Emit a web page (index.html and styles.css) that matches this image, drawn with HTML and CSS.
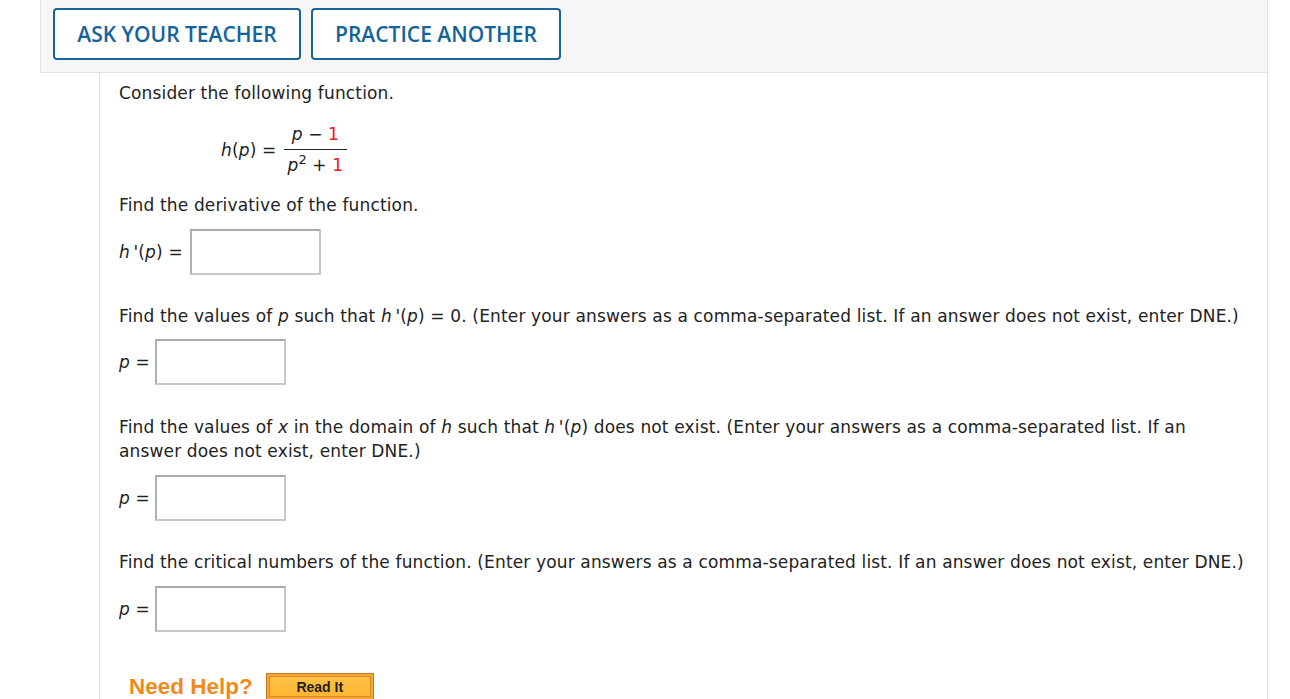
FILE: index.html
```html
<!DOCTYPE html>
<html>
<head>
<meta charset="utf-8">
<link rel="stylesheet" href="styles.css">
</head>
<body>
<div class="page">
  <div class="toolbar">
    <button class="tbtn">ASK YOUR TEACHER</button>
    <button class="tbtn">PRACTICE ANOTHER</button>
  </div>
  <div class="content">
    <p class="line first">Consider the following function.</p>
    <div class="formula">
      <span class="lhs"><i>h</i>(<i>p</i>) =</span>
      <span class="frac">
        <span class="num"><i>p</i> &minus; <span class="red">1</span></span>
        <span class="den"><i>p</i><sup>2</sup> + <span class="red">1</span></span>
      </span>
    </div>
    <p class="line q2">Find the derivative of the function.</p>
    <div class="answer a1"><span class="lbl"><i>h</i>&thinsp;'(<i>p</i>) =</span><span class="box"></span></div>
    <p class="line q3">Find the values of <i>p</i> such that <i>h</i>&thinsp;'(<i>p</i>) = 0. (Enter your answers as a comma-separated list. If an answer does not exist, enter DNE.)</p>
    <div class="answer a2"><span class="lbl lp"><i>p</i> =</span><span class="box"></span></div>
    <p class="line q4">Find the values of <i>x</i> in the domain of <i>h</i> such that <i>h</i>&thinsp;'(<i>p</i>) does not exist. (Enter your answers as a comma-separated list. If an<br>answer does not exist, enter DNE.)</p>
    <div class="answer a3"><span class="lbl lp"><i>p</i> =</span><span class="box"></span></div>
    <p class="line q5">Find the critical numbers of the function. (Enter your answers as a comma-separated list. If an answer does not exist, enter DNE.)</p>
    <div class="answer a4"><span class="lbl lp"><i>p</i> =</span><span class="box"></span></div>
    <div class="help">
      <span class="needhelp">Need Help?</span>
      <span class="readit">Read It</span>
    </div>
  </div>
</div>
</body>
</html>
```
FILE: styles.css
```css
html, body {
  margin: 0;
  padding: 0;
  background: #ffffff;
}
body {
  font-family: "DejaVu Sans", Verdana, sans-serif;
  color: #222222;
}
.page {
  padding-left: 40px;
  width: 1228px;
}
.toolbar {
  box-sizing: border-box;
  height: 73px;
  background: #f6f6f6;
  border: 1px solid #e2e2e2;
  border-top: none;
  display: flex;
  gap: 10px;
  padding: 8px 0 0 12px;
}
.tbtn {
  box-sizing: border-box;
  height: 52px;
  background: #ffffff;
  border: 2px solid #1a6496;
  border-radius: 4px;
  color: #14639a;
  font-family: "Open Sans", sans-serif;
  font-weight: 600;
  font-size: 21px;
  padding: 0;
  letter-spacing: 0;
}
.tbtn:first-child { width: 248px; }
.tbtn:nth-child(2) { width: 250px; }
.content {
  margin-left: 59px;
  border-left: 1px solid #e2e2e2;
  border-right: 1px solid #e2e2e2;
  padding: 0 0 0 19px;
  font-size: 17px;
  letter-spacing: 0.15px;
  height: 626px;
  overflow: hidden;
}
.line {
  margin: 0;
  line-height: 24px;
}
.first { padding-top: 8px; }
.formula {
  display: flex;
  align-items: center;
  margin: 19px 0 0 102px;
}
.lhs { margin-right: 7px; }
.frac {
  display: inline-flex;
  flex-direction: column;
  align-items: center;
}
.num {
  padding: 0 8px 5px;
  border-bottom: 1px solid #222;
  line-height: 20px;
}
.den {
  padding: 5px 4px 0;
  line-height: 20px;
}
.den sup {
  font-size: 13px;
  line-height: 0;
  vertical-align: 7px;
}
.red { color: #e8161b; }
.q2 { margin-top: 18px; }
.answer {
  display: flex;
  align-items: center;
  height: 46px;
}
.lbl { margin-right: 7px; }
.lp { margin-right: 5px; }
.box {
  box-sizing: border-box;
  width: 131px;
  height: 46px;
  border: 2px solid #c8c8c8;
  border-top-color: #aaaaaa;
  border-left-color: #b0b0b0;
  background: #ffffff;
}
.a1 { margin-top: 12px; }
.q3 { margin-top: 29px; }
.a2 { margin-top: 11px; }
.q4 { margin-top: 30px; }
.a3 { margin-top: 12px; }
.q5 { margin-top: 29px; }
.a4 { margin-top: 12px; }
.help {
  display: flex;
  align-items: center;
  gap: 13px;
  margin: 41px 0 0 10px;
  letter-spacing: 0;
}
.needhelp {
  font-family: "Liberation Sans", Arial, sans-serif;
  font-weight: bold;
  font-size: 22.5px;
  line-height: 26px;
  color: #f08a1d;
}
.readit {
  box-sizing: border-box;
  width: 108px;
  height: 27px;
  border: 1px solid #c9772a;
  background: linear-gradient(#ffc24a, #ffb52e);
  box-shadow: inset 0 0 0 2px #f7a531, inset 0 0 0 3px #d98c2a;
  font-family: "Liberation Sans", Arial, sans-serif;
  font-weight: bold;
  font-size: 14px;
  color: #222;
  display: flex;
  align-items: center;
  justify-content: center;
}
```
